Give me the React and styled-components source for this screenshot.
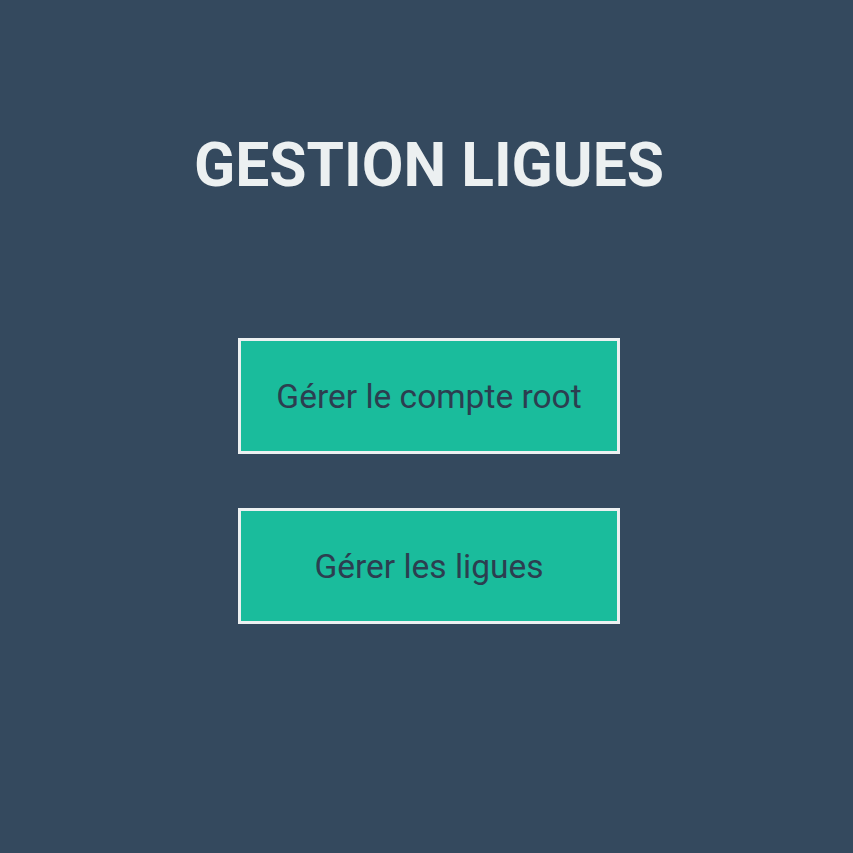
import styled, { createGlobalStyle } from "styled-components";

const GlobalStyle = createGlobalStyle`
    html, body {
        margin: 0;
        padding: 0;
        background-color: #34495e;
    }
    body {
        font-family: Roboto, "Liberation Sans", sans-serif;
    }
`;

const Page = styled.div`
    width: 853px;
    height: 853px;
    background-color: #34495e;
    display: flex;
    flex-direction: column;
    align-items: center;
    padding-top: 130px;
    box-sizing: border-box;
`;

const Title = styled.h1`
    margin: 0;
    color: #ecf0f1;
    font-size: 60.5px;
    font-weight: 700;
    line-height: 72px;
    padding-left: 5px;
`;

const Menu = styled.div`
    display: flex;
    flex-direction: column;
    gap: 54px;
    margin-top: 136px;
    padding-left: 5px;
`;

const MenuButton = styled.button`
    width: 382px;
    height: 116px;
    box-sizing: border-box;
    background-color: #1abc9c;
    border: 3px solid #ecf0f1;
    color: #2c3e50;
    font-family: Roboto, "Liberation Sans", sans-serif;
    font-size: 33.5px;
    cursor: pointer;
    &:hover {
        background-color: #16a085;
    }
`;

export default function App() {
    return (
        <Page>
            <GlobalStyle />
            <Title>GESTION LIGUES</Title>
            <Menu>
                <MenuButton>Gérer le compte root</MenuButton>
                <MenuButton>Gérer les ligues</MenuButton>
            </Menu>
        </Page>
    );
}
